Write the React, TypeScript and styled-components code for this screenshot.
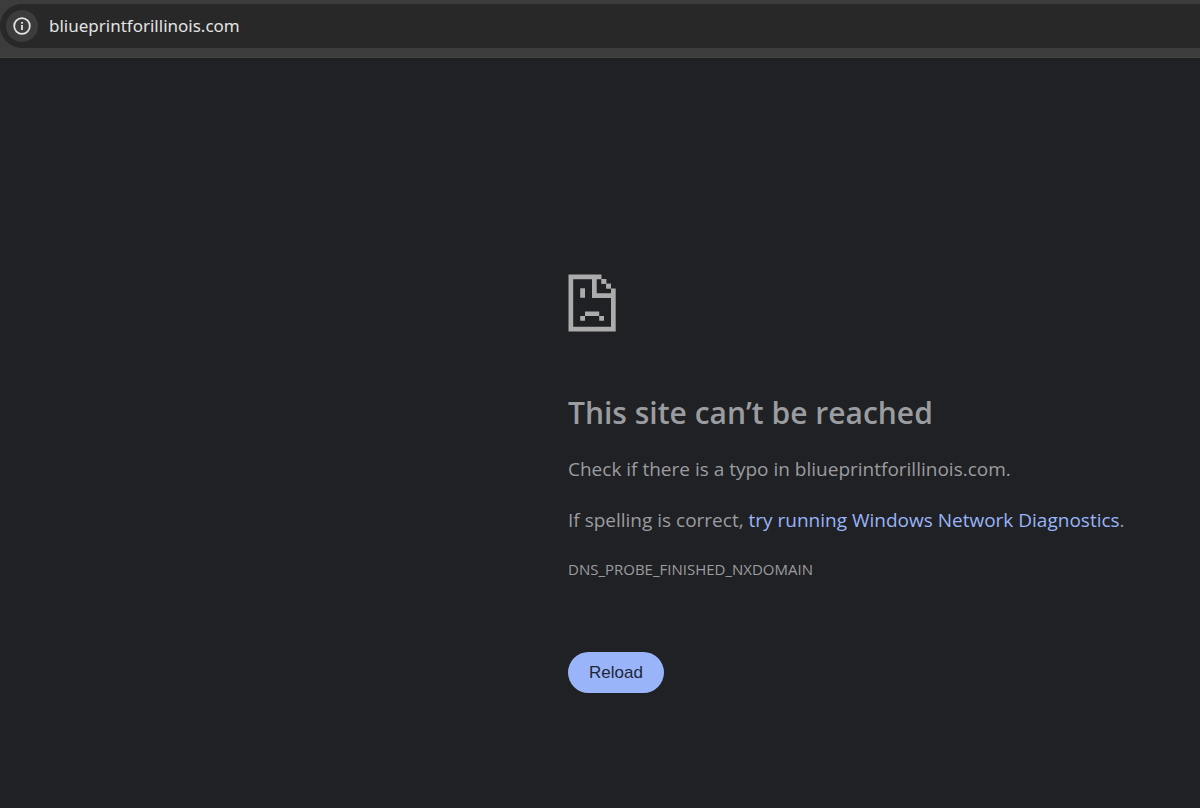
import React from 'react';
import styled, { createGlobalStyle } from 'styled-components';

const GlobalStyle = createGlobalStyle`
  * { box-sizing: border-box; }
  body {
    margin: 0;
    background: #202124;
    color: #9b9c9f;
    font-family: "Segoe UI", "Open Sans", "Noto Sans", sans-serif;
  }
`;

const Toolbar = styled.header`
  padding: 4px 0 9px;
  background: #3c3c3c;
  border-bottom: 1px solid #444444;
`;

const AddressBar = styled.div`
  display: flex;
  align-items: center;
  gap: 11px;
  height: 44px;
  padding-left: 6px;
  border-radius: 22px 0 0 22px;
  background: #282828;
`;

const InfoButton = styled.button`
  display: flex;
  align-items: center;
  justify-content: center;
  width: 32px;
  height: 32px;
  padding: 0;
  border: 0;
  border-radius: 50%;
  background: #3c3c3c;
  color: #e3e3e3;
`;

const AddressInput = styled.input`
  flex: 1;
  min-width: 0;
  padding: 0;
  border: 0;
  outline: 0;
  background: transparent;
  color: #e3e3e3;
  font: 400 17px/24px "Segoe UI", "Noto Sans", sans-serif;
`;

const Page = styled.main`
  display: grid;
  grid-template-columns: 71fr 79fr;
  padding: 216px 0 112px;
`;

const ErrorContent = styled.section`
  grid-column: 2;
`;

const SadPage = styled.svg`
  display: block;
  margin-bottom: 60px;
`;

const Title = styled.h1`
  margin: 0 0 21px;
  font-size: 30px;
  font-weight: 600;
  line-height: 42px;
`;

const Message = styled.p`
  margin: 0 0 23px;
  font-size: 19px;
  line-height: 28px;
`;

const DiagnosticsLink = styled.a`
  color: #99b4f8;
  text-decoration: none;
`;

const ErrorCode = styled.p`
  margin: 0 0 71px;
  font-size: 15px;
  line-height: 24px;
`;

const ReloadButton = styled.button`
  height: 41px;
  padding: 0 21px;
  border: 0;
  border-radius: 21px;
  background: #99b4f8;
  color: #202637;
  font: 400 17px/24px "Liberation Sans", Arial, sans-serif;
`;

export default function App() {
  return (
    <>
      <GlobalStyle />
      <Toolbar>
        <AddressBar>
          <InfoButton aria-label="View site information">
            <svg width="18" height="18" viewBox="0 0 18 18" fill="none" aria-hidden="true">
              <circle cx="9" cy="9" r="7.8" stroke="currentColor" strokeWidth="1.8" />
              <path d="M9 8v5" stroke="currentColor" strokeWidth="1.8" />
              <path d="M9 5v1.8" stroke="currentColor" strokeWidth="1.8" />
            </svg>
          </InfoButton>
          <AddressInput aria-label="Address" defaultValue="bliueprintforillinois.com" spellCheck={false} />
        </AddressBar>
      </Toolbar>
      <Page>
        <ErrorContent>
          <SadPage width="48" height="58" viewBox="0 0 48 58" fill="#acacac" aria-hidden="true">
            <path d="M0.5 0.5H33.5V5H38.2V9.7H43V14.5H47.7V57.5H0.5ZM5.2 5.2V52.8H43V24H24V5.2ZM28.7 5.2V19.3H43V14.5H38.2V9.7H33.5V5.2Z" fillRule="evenodd" />
            <path d="M33.5 5H38.2V9.7H33.5ZM38.2 9.7H43V14.5H38.2Z" />
            <path d="M12.2 14.3H17V23.7H12.2ZM17 37.5H31.2V42H36V46.7H31.2V42H17V46.7H12.2V42H17Z" />
          </SadPage>
          <Title>This site can’t be reached</Title>
          <Message>Check if there is a typo in bliueprintforillinois.com.</Message>
          <Message>
            If spelling is correct, <DiagnosticsLink href="#diagnostics">try running Windows Network Diagnostics</DiagnosticsLink>.
          </Message>
          <ErrorCode>DNS_PROBE_FINISHED_NXDOMAIN</ErrorCode>
          <ReloadButton>Reload</ReloadButton>
        </ErrorContent>
      </Page>
    </>
  );
}
